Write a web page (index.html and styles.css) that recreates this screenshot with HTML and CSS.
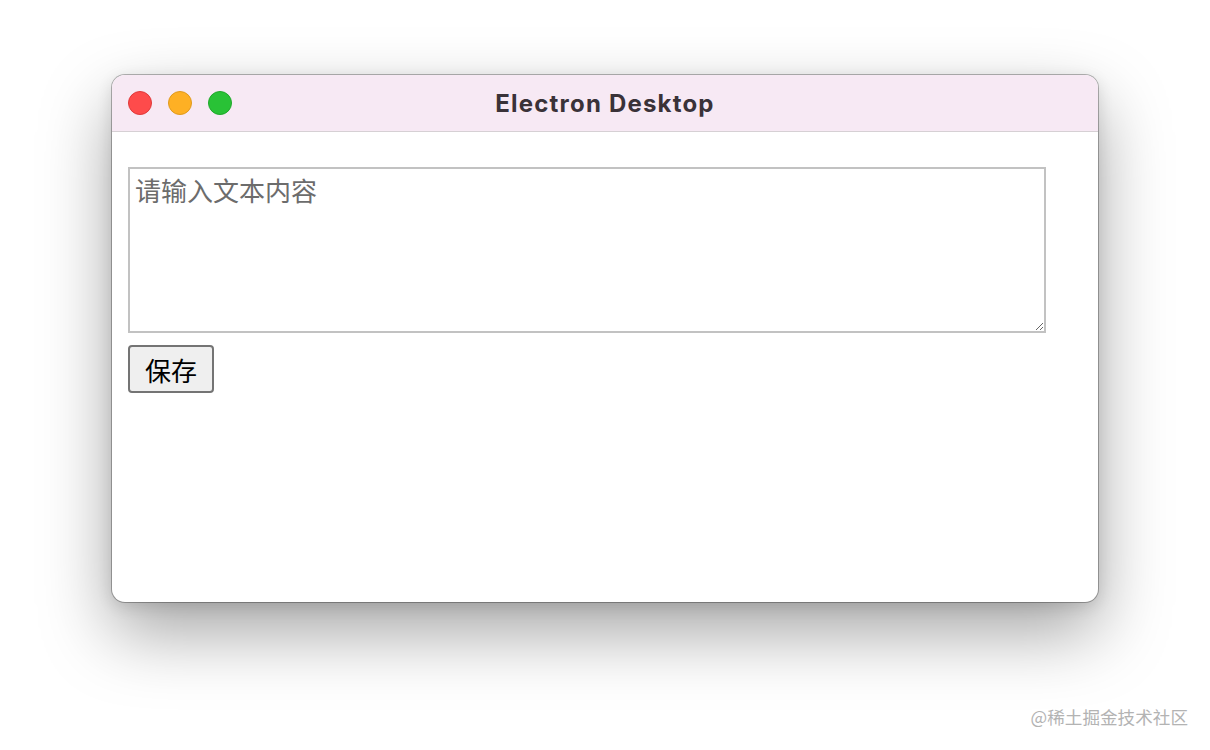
FILE: index.html
```html
<!DOCTYPE html>
<html lang="zh-CN">
<head>
  <meta charset="UTF-8" />
  <meta name="viewport" content="width=device-width, initial-scale=1" />
  <title>Electron Desktop</title>
  <link rel="stylesheet" href="styles.css">
</head>
<body>
  <div class="stage">
    <div class="window">
      <div class="titlebar">
        <div class="lights">
          <span class="light close"></span>
          <span class="light min"></span>
          <span class="light max"></span>
        </div>
        <div class="title">Electron Desktop</div>
      </div>
      <div class="content">
        <textarea class="editor" placeholder="请输入文本内容"></textarea>
        <button class="save">保存</button>
      </div>
    </div>
  </div>
  <div class="watermark">@稀土掘金技术社区</div>
</body>
</html>
```

FILE: styles.css
```css
/* mac style electron window */
body {
  margin: 0;
  background: #fff;
  font-family: "Noto Sans CJK SC", sans-serif;
}
.stage {
  height: 750px;
  box-sizing: border-box;
  padding: 75px 0 0 112px;
}
.window {
  width: 986px;
  height: 527px;
  background: #fff;
  border-radius: 13px;
  overflow: hidden;
  box-shadow: 0 0 0 1px rgba(0, 0, 0, 0.28), 0 30px 70px rgba(0, 0, 0, 0.36), 0 4px 16px rgba(0, 0, 0, 0.12);
}
.titlebar {
  position: relative;
  height: 56px;
  background: #f7e9f4;
  border-bottom: 1px solid #d6d0d4;
  display: flex;
  align-items: center;
}
.lights {
  display: flex;
  gap: 16px;
  padding-left: 16px;
}
.light {
  width: 24px;
  height: 24px;
  border-radius: 50%;
  box-sizing: border-box;
}
.close {
  background: #fe4b4b;
  border: 1px solid #e0393a;
}
.min {
  background: #feb024;
  border: 1px solid #e09a1c;
}
.max {
  background: #29c236;
  border: 1px solid #1fa82a;
}
.title {
  position: absolute;
  left: 0;
  right: 0;
  text-align: center;
  font-family: Inter, "Liberation Sans", sans-serif;
  font-weight: 700;
  font-size: 24px;
  letter-spacing: 1.2px;
  color: #3a3238;
  pointer-events: none;
}
.content {
  padding: 35px 16px;
  display: flex;
  flex-direction: column;
  align-items: flex-start;
  gap: 12px;
}
.editor {
  width: 918px;
  height: 166px;
  box-sizing: border-box;
  border: 2px solid #c2c2c2;
  padding: 5px 5px;
  font-family: "Noto Sans CJK SC", sans-serif;
  font-size: 26px;
  line-height: 1.2;
  resize: both;
  outline: none;
}
.editor::placeholder {
  color: #6c6c6c;
}
.save {
  height: 48px;
  padding: 0 15px;
  font-family: "Noto Sans CJK SC", sans-serif;
  font-size: 26px;
  color: #000;
  background: #efefef;
  border: 2px solid #747474;
  border-radius: 4px;
}
.watermark {
  position: absolute;
  right: 22px;
  top: 704px;
  font-size: 17.6px;
  color: #b3b3b3;
}
```
